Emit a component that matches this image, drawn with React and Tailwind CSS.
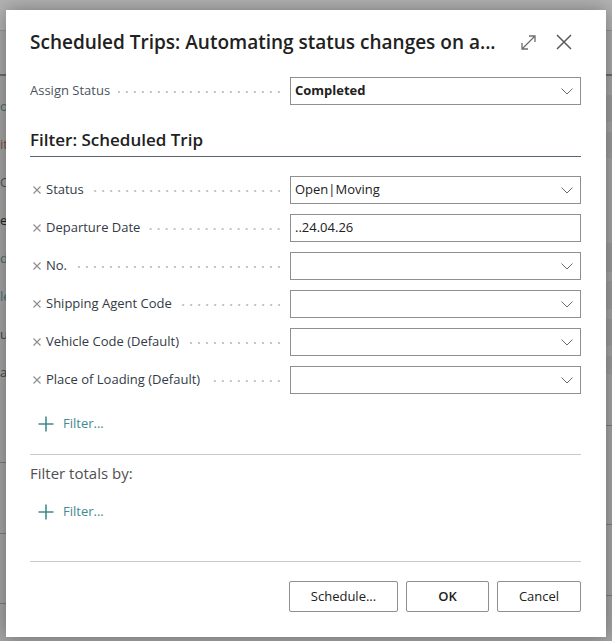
import React from "react";

const font = "font-['Open_Sans','Noto_Sans',sans-serif]";

function Chevron() {
  return (
    <svg width="12" height="7" viewBox="0 0 12 7" className="shrink-0">
      <polyline points="0.5,0.5 6,6 11.5,0.5" fill="none" stroke="#6b6b6b" strokeWidth="1" />
    </svg>
  );
}

function RemoveIcon() {
  return (
    <svg width="8" height="8" viewBox="0 0 8 8" className="shrink-0">
      <path d="M0.5 0.5 L7.5 7.5 M7.5 0.5 L0.5 7.5" stroke="#8c8c8c" strokeWidth="1.1" />
    </svg>
  );
}

function PlusIcon() {
  return (
    <svg width="16" height="16" viewBox="0 0 16 16" className="shrink-0">
      <path d="M8 0.5 V15.5 M0.5 8 H15.5" stroke="#3f8c90" strokeWidth="1.6" />
    </svg>
  );
}

// dotted leader between a caption and its field; the last dot sits flush right
function Leader() {
  return (
    <span className="ml-[8px] mr-[10px] mt-[2px] h-[2px] flex-1 bg-[linear-gradient(to_right,transparent_6px,#c4c4c4_6px)] bg-[length:8px_2px] bg-right bg-repeat-x" />
  );
}

function Field({ value, bold, select }) {
  return (
    <div className="flex h-[28px] w-[291px] shrink-0 items-center border border-[#8f8f8f] bg-white pl-[4px] pr-[7px]">
      <span className={`flex-1 text-[13px] text-[#212121] ${bold ? "font-bold" : ""}`}>{value}</span>
      {select && <Chevron />}
    </div>
  );
}

function AddFilter() {
  return (
    <div className="flex h-[28px] items-center gap-[9px] pl-[8px]">
      <PlusIcon />
      <span className="text-[13px] text-[#3f8c90]">Filter...</span>
    </div>
  );
}

const filters = [
  { label: "Status", value: "Open|Moving", select: true },
  { label: "Departure Date", value: "..24.04.26", select: false },
  { label: "No.", value: "", select: true },
  { label: "Shipping Agent Code", value: "", select: true },
  { label: "Vehicle Code (Default)", value: "", select: true },
  { label: "Place of Loading (Default)", value: "", select: true },
];

// Dimmed list page that sits behind the modal
const behindRows = [
  { t: "oM", c: "text-[#3f6f72]" },
  { t: "it", c: "text-[#7a4a44]" },
  { t: "Co", c: "text-[#555]" },
  { t: "er", c: "text-[#222]" },
  { t: "d", c: "text-[#3f6f72]" },
  { t: "le", c: "text-[#3f6f72]" },
  { t: "ur", c: "text-[#444]" },
  { t: "ar", c: "text-[#444]" },
];

export default function App() {
  return (
    <div className={`relative h-[641px] w-[612px] overflow-hidden bg-[#a5a5a5] ${font}`}>
      {/* page behind */}
      <div className="h-[31px] border-b border-[#979797] bg-[#b3b3b3]" />
      <div className="h-[45px] border-b-2 border-[#6c6c6c] bg-[#a9a9a9]" />
      <div className="flex">
        <div className="w-[300px]">
          <div className="h-[12px]" />
          {behindRows.map((r) => (
            <div key={r.t} className={`flex h-[38px] items-center text-[13px] ${r.c}`}>
              {r.t}
            </div>
          ))}
          <div className="h-[70px]" />
          <div className="h-[71px] border-t border-[#7c7c7c]" />
          <div className="h-[70px] border-t border-[#7c7c7c]" />
          <div className="border-t border-[#7c7c7c]" />
        </div>
        <div className="flex-1">
          <div className="h-[19px]" />
          <div className="h-[27px] bg-[#9d9d9d]" />
          <div className="h-[10px]" />
          <div className="h-[26px] bg-[#9d9d9d]" />
          <div className="h-[85px]" />
          <div className="h-[29px] bg-[#9d9d9d]" />
          <div className="h-[9px]" />
          <div className="h-[28px] bg-[#9d9d9d]" />
          <div className="h-[10px]" />
          <div className="h-[27px] bg-[#9d9d9d]" />
          <div className="h-[10px]" />
          <div className="h-[18px] bg-[#9d9d9d]" />
          <div className="h-[51px]" />
          <div className="h-[99px] border-t border-[#7c7c7c]" />
          <div className="h-[71px] border-t border-[#7c7c7c]" />
          <div className="border-t border-[#7c7c7c]" />
        </div>
      </div>

      {/* modal dialog */}
      <div className="absolute left-[6px] top-[10px] flex w-[600px] flex-col bg-white pb-[25px] pl-[24px] pr-[25px] shadow-[0_0_18px_rgba(0,0,0,0.35)]">
        <div className="flex h-[64px] items-center">
          <h1 className="flex-1 text-[19px] font-semibold text-[#212121]">
            Scheduled Trips: Automating status changes on a...
          </h1>
          <svg width="15" height="15" viewBox="0 0 15 15" className="mr-[20px]">
            <path d="M1 14 L14 1 M8 1 H14 V7 M1 8 V14 H7" fill="none" stroke="#6e6e6e" strokeWidth="1.3" />
          </svg>
          <svg width="16" height="16" viewBox="0 0 16 16" className="mr-[9px]">
            <path d="M1 1 L15 15 M15 1 L1 15" stroke="#5a5a5a" strokeWidth="1.5" />
          </svg>
        </div>

        <div className="mt-[3px] flex h-[28px] items-center">
          <span className="text-[13px] text-[#4d5360]">Assign Status</span>
          <Leader />
          <Field value="Completed" bold select />
        </div>

        <div className="mt-[23px] border-b border-[#5c6470] pb-[4px]">
          <h2 className="h-[24px] text-[17px] font-semibold leading-[24px] text-[#212121]">Filter: Scheduled Trip</h2>
        </div>

        <div className="mt-[19px] flex flex-col gap-[10px]">
          {filters.map((f) => (
            <div key={f.label} className="flex h-[28px] items-center">
              <span className="flex items-center gap-[5px] pl-[3px]">
                <RemoveIcon />
                <span className="text-[13px] text-[#333a45]">{f.label}</span>
              </span>
              <Leader />
              <Field value={f.value} select={f.select} />
            </div>
          ))}
        </div>

        <div className="mt-[16px]">
          <AddFilter />
        </div>

        <div className="mt-[16px] border-t border-[#c8c8c8]" />

        <div className="mt-[8px] h-[20px] text-[15px] leading-[20px] text-[#505050]">Filter totals by:</div>

        <div className="mt-[15px]">
          <AddFilter />
        </div>

        <div className="mt-[35px] border-t border-[#c8c8c8]" />

        <div className="mt-[19px] flex justify-end gap-[8px]">
          <button className="h-[31px] w-[109px] rounded-[2px] border border-[#8f8f8f] bg-white text-[13px] text-[#212121]">
            Schedule...
          </button>
          <button className="h-[31px] w-[83px] rounded-[2px] border border-[#8f8f8f] bg-white text-[13px] font-semibold text-[#212121]">
            OK
          </button>
          <button className="h-[31px] w-[84px] rounded-[2px] border border-[#8f8f8f] bg-white text-[13px] text-[#212121]">
            Cancel
          </button>
        </div>
      </div>
    </div>
  );
}
